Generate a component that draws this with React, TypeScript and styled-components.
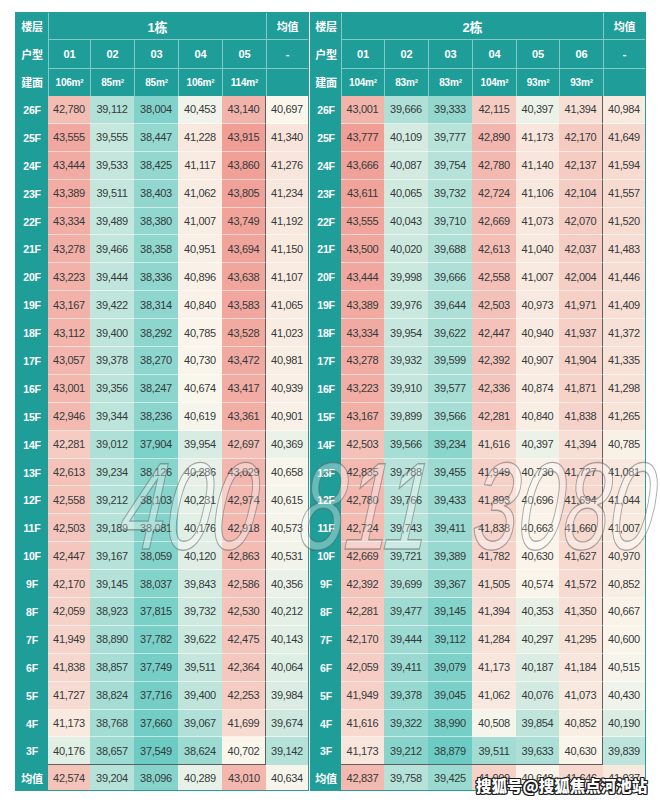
import React from "react";
import styled, { createGlobalStyle } from "styled-components";

const GlobalStyle = createGlobalStyle`
  html, body {
    margin: 0;
    padding: 0;
    background: #ffffff;
  }
  body {
    font-family: "Liberation Sans", "Noto Sans CJK SC", Arial, sans-serif;
  }
`;

const TEAL = [108, 204, 196];
const CREAM = [250, 246, 236];
const SALMON = [240, 158, 150];

const mix = (a: number[], b: number[], t: number) =>
  a.map((v, i) => Math.round(v + (b[i] - v) * Math.max(0, Math.min(1, t))));

const heat = (v: number, [min, mid, max]: number[]) => {
  const c = v <= mid ? mix(CREAM, TEAL, (mid - v) / (mid - min)) : mix(CREAM, SALMON, (v - mid) / (max - mid));
  return `rgb(${c[0]}, ${c[1]}, ${c[2]})`;
};

const parse = (line: string) => line.trim().split(/\s+/).map((s) => Number(s.replace(",", "")));
const fmt = (n: number) => n.toLocaleString("en-US");

const floors = Array.from({ length: 24 }, (_, i) => `${26 - i}F`);

type Building = {
  name: string;
  units: string[];
  areas: string[];
  cols: string;
  scale: number[];
  rows: number[][];
  avg: number[];
};

const buildings: Building[] = [
  {
    name: "1栋",
    units: ["01", "02", "03", "04", "05"],
    areas: ["106m²", "85m²", "85m²", "106m²", "114m²"],
    cols: "32px 42px 44px 44px 44px 44px 42px",
    scale: [37549, 40700, 43915],
    rows: `
      42,780 39,112 38,004 40,453 43,140 40,697
      43,555 39,555 38,447 41,228 43,915 41,340
      43,444 39,533 38,425 41,117 43,860 41,276
      43,389 39,511 38,403 41,062 43,805 41,234
      43,334 39,489 38,380 41,007 43,749 41,192
      43,278 39,466 38,358 40,951 43,694 41,150
      43,223 39,444 38,336 40,896 43,638 41,107
      43,167 39,422 38,314 40,840 43,583 41,065
      43,112 39,400 38,292 40,785 43,528 41,023
      43,057 39,378 38,270 40,730 43,472 40,981
      43,001 39,356 38,247 40,674 43,417 40,939
      42,946 39,344 38,236 40,619 43,361 40,901
      42,281 39,012 37,904 39,954 42,697 40,369
      42,613 39,234 38,126 40,286 43,029 40,658
      42,558 39,212 38,103 40,231 42,974 40,615
      42,503 39,189 38,081 40,176 42,918 40,573
      42,447 39,167 38,059 40,120 42,863 40,531
      42,170 39,145 38,037 39,843 42,586 40,356
      42,059 38,923 37,815 39,732 42,530 40,212
      41,949 38,890 37,782 39,622 42,475 40,143
      41,838 38,857 37,749 39,511 42,364 40,064
      41,727 38,824 37,716 39,400 42,253 39,984
      41,173 38,768 37,660 39,067 41,699 39,674
      40,176 38,657 37,549 38,624 40,702 39,142`
      .trim()
      .split("\n")
      .map(parse),
    avg: parse("42,574 39,204 38,096 40,289 43,010 40,634"),
  },
  {
    name: "2栋",
    units: ["01", "02", "03", "04", "05", "06"],
    areas: ["104m²", "83m²", "83m²", "104m²", "93m²", "93m²"],
    cols: "30px 43px 44px 44px 44px 43px 44px 42px",
    scale: [38879, 40550, 43777],
    rows: `
      43,001 39,666 39,333 42,115 40,397 41,394 40,984
      43,777 40,109 39,777 42,890 41,173 42,170 41,649
      43,666 40,087 39,754 42,780 41,140 42,137 41,594
      43,611 40,065 39,732 42,724 41,106 42,104 41,557
      43,555 40,043 39,710 42,669 41,073 42,070 41,520
      43,500 40,020 39,688 42,613 41,040 42,037 41,483
      43,444 39,998 39,666 42,558 41,007 42,004 41,446
      43,389 39,976 39,644 42,503 40,973 41,971 41,409
      43,334 39,954 39,622 42,447 40,940 41,937 41,372
      43,278 39,932 39,599 42,392 40,907 41,904 41,335
      43,223 39,910 39,577 42,336 40,874 41,871 41,298
      43,167 39,899 39,566 42,281 40,840 41,838 41,265
      42,503 39,566 39,234 41,616 40,397 41,394 40,785
      42,835 39,788 39,455 41,949 40,730 41,727 41,081
      42,780 39,766 39,433 41,893 40,696 41,694 41,044
      42,724 39,743 39,411 41,838 40,663 41,660 41,007
      42,669 39,721 39,389 41,782 40,630 41,627 40,970
      42,392 39,699 39,367 41,505 40,574 41,572 40,852
      42,281 39,477 39,145 41,394 40,353 41,350 40,667
      42,170 39,444 39,112 41,284 40,297 41,295 40,600
      42,059 39,411 39,079 41,173 40,187 41,184 40,515
      41,949 39,378 39,045 41,062 40,076 41,073 40,430
      41,616 39,322 38,990 40,508 39,854 40,852 40,190
      41,173 39,212 38,879 39,511 39,633 40,630 39,839`
      .trim()
      .split("\n")
      .map(parse),
    avg: parse("42,837 39,758 39,425 41,909 40,648 41,646 41,037"),
  },
];

const Page = styled.div`
  position: relative;
  width: 660px;
  height: 804px;
  overflow: hidden;
  padding: 12px 0 0 15px;
  box-sizing: border-box;
`;

const Sheet = styled.div`
  display: flex;
  gap: 1px;
`;

const Block = styled.div<{ $cols: string }>`
  display: grid;
  grid-template-columns: ${(p) => p.$cols};
  grid-template-rows: 26px 29px 28px repeat(24, 27.9px) 25px;
  background: #1f9d99;
  border: 1px solid #2a9c97;
`;

const Label = styled.div<{ $head?: boolean }>`
  display: flex;
  align-items: center;
  justify-content: center;
  color: #ffffff;
  font-family: "Liberation Sans", "Noto Sans CJK SC", sans-serif;
  font-size: ${(p) => (p.$head ? "11px" : "10.5px")};
  font-weight: ${(p) => (p.$head ? 700 : 600)};
  letter-spacing: -0.2px;
`;

const Head = styled.div<{ $span?: number; $top?: boolean; $size: number }>`
  grid-column: span ${(p) => p.$span ?? 1};
  display: flex;
  align-items: center;
  justify-content: center;
  color: #ffffff;
  font-family: "Liberation Sans", "Noto Sans CJK SC", sans-serif;
  font-size: ${(p) => p.$size}px;
  font-weight: 700;
  letter-spacing: -0.2px;
  border-left: 1px solid rgba(255, 255, 255, 0.45);
  border-top: ${(p) => (p.$top ? "1px solid rgba(255, 255, 255, 0.45)" : "none")};
`;

const Cell = styled.div<{ $right?: boolean; $bottom?: boolean; $line?: boolean }>`
  display: flex;
  align-items: center;
  justify-content: center;
  box-sizing: border-box;
  color: #353b3b;
  font-family: "Liberation Sans", Arial, sans-serif;
  font-size: 11px;
  letter-spacing: -0.3px;
  border-bottom: ${(p) =>
    p.$bottom ? "1px solid #5b5f5e" : p.$line ? "1px solid rgba(255, 255, 255, 0.55)" : "none"};
  border-right: ${(p) => (p.$right ? "1px solid #5b5f5e" : "none")};
`;

const Phone = styled.div`
  position: absolute;
  left: 118px;
  top: 444px;
  font-family: "Liberation Sans", Arial, sans-serif;
  font-size: 124px;
  line-height: 1;
  font-style: italic;
  white-space: pre;
  color: rgba(255, 255, 255, 0.32);
  -webkit-text-stroke: 1.4px rgba(85, 92, 92, 0.5);
  transform: scaleX(0.66) skewX(-8deg);
  transform-origin: left 85%;
  word-spacing: 30px;
  pointer-events: none;
`;

const Stamp = styled.div`
  position: absolute;
  left: 476px;
  top: 776px;
  font-family: "Noto Sans CJK SC", sans-serif;
  font-size: 15.5px;
  line-height: 18px;
  font-weight: 900;
  color: #ffffff;
  white-space: nowrap;
  text-shadow:
    1px 0 0 #1b1b1b, -1px 0 0 #1b1b1b, 0 1px 0 #1b1b1b, 0 -1px 0 #1b1b1b,
    1px 1px 0 #1b1b1b, -1px -1px 0 #1b1b1b, 1px -1px 0 #1b1b1b, -1px 1px 0 #1b1b1b;
`;

const BuildingTable = ({ b }: { b: Building }) => {
  const n = b.units.length;
  return (
    <Block $cols={b.cols}>
      <Label $head>楼层</Label>
      <Head $span={n} $size={13}>
        {b.name}
      </Head>
      <Head $size={11}>均值</Head>

      <Label $head>户型</Label>
      {b.units.map((u) => (
        <Head key={u} $top $size={11}>
          {u}
        </Head>
      ))}
      <Head $top $size={11}>
        -
      </Head>

      <Label $head>建面</Label>
      {b.areas.map((a, i) => (
        <Head key={i} $top $size={10}>
          {a}
        </Head>
      ))}
      <Head $top $size={10} />

      {b.rows.map((row, r) => (
        <React.Fragment key={floors[r]}>
          <Label>{floors[r]}</Label>
          {row.map((v, c) => (
            <Cell
              key={c}
              $line={r < b.rows.length - 1}
              $right={c === n - 1}
              $bottom={r === b.rows.length - 1 && c < n}
              style={{ background: heat(v, b.scale) }}
            >
              {fmt(v)}
            </Cell>
          ))}
        </React.Fragment>
      ))}

      <Label $head>均值</Label>
      {b.avg.map((v, c) => (
        <Cell key={c} style={{ background: heat(v, b.scale) }}>
          {fmt(v)}
        </Cell>
      ))}
    </Block>
  );
};

export default function App() {
  return (
    <Page>
      <GlobalStyle />
      <Sheet>
        {buildings.map((b) => (
          <BuildingTable key={b.name} b={b} />
        ))}
      </Sheet>
      <Phone>{"400 811 3080"}</Phone>
      <Stamp>搜狐号@搜狐焦点河池站</Stamp>
    </Page>
  );
}
